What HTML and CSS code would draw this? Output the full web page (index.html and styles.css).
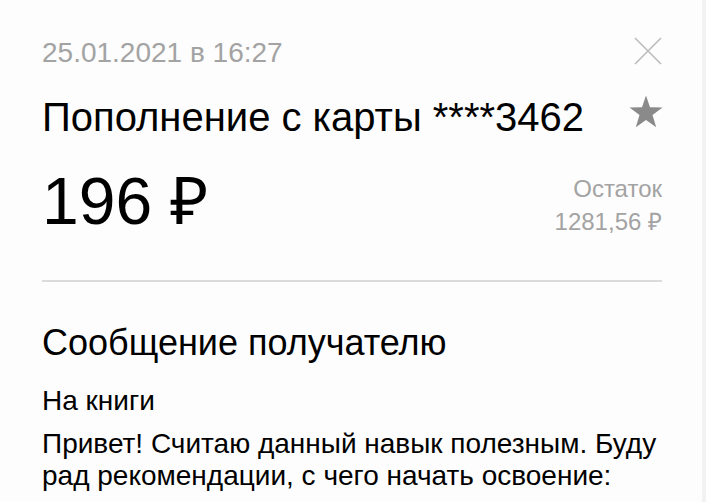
FILE: index.html
```html
<!DOCTYPE html>
<html lang="ru">
<head>
<meta charset="utf-8">
<link rel="stylesheet" href="styles.css">
</head>
<body>
<div class="page">
  <div class="card">
    <div class="row top">
      <div class="date">25.01.2021 в 16:27</div>
      <svg class="close" width="28" height="28" viewBox="0 0 28 28"><path d="M1 1L27 27M27 1L1 27" stroke="#bcbcbc" stroke-width="1.6" fill="none"/></svg>
    </div>
    <div class="row title-row">
      <div class="title">Пополнение с карты ****3462</div>
      <svg class="star" width="34" height="33" viewBox="0 0 34 33"><path d="M17 0.5L21 12.3L33.5 12.5L23.5 20L27.2 32.3L17 24.9L6.8 32.3L10.5 20L0.5 12.5L13 12.3Z" fill="#8a8a8a"/></svg>
    </div>
    <div class="row amount-row">
      <div class="amount">196 ₽</div>
      <div class="balance">
        <div class="balance-label">Остаток</div>
        <div class="balance-value">1281,56 ₽</div>
      </div>
    </div>
    <div class="divider"></div>
    <h2 class="heading">Сообщение получателю</h2>
    <p class="text first">На книги</p>
    <p class="text">Привет! Считаю данный навык полезным. Буду рад рекомендации, с чего начать освоение:</p>
  </div>
</div>
</body>
</html>
```
FILE: styles.css
```css
html, body {
  margin: 0;
  padding: 0;
  height: 100%;
  overflow: hidden;
}
body {
  background: #f4f2f1;
  font-family: "Liberation Sans", Arial, sans-serif;
  color: #000;
}
.page {
  width: 702px;
  height: 100%;
  background: #fdfdfd;
}
.card {
  padding: 33px 40px 0 42px;
}
.row {
  display: flex;
  justify-content: space-between;
  align-items: flex-start;
}
.date {
  font-size: 28px;
  line-height: 40px;
  color: #a3a3a3;
}
.close {
  margin-top: 4px;
}
.title-row {
  margin-top: 20px;
}
.title {
  font-size: 40px;
  line-height: 48px;
}
.star {
  margin-top: 2px;
  margin-right: -1px;
}
.amount-row {
  margin-top: 24px;
}
.amount {
  font-size: 66px;
  line-height: 72px;
}
.balance {
  text-align: right;
  margin-top: 7px;
  color: #a3a3a3;
  font-size: 24px;
  line-height: 33px;
}
.divider {
  margin-top: 42px;
  height: 2px;
  background: #dddada;
}
.heading {
  margin: 41px 0 0;
  font-weight: normal;
  font-size: 36px;
  line-height: 40px;
}
.text {
  margin: 11px 0 0;
  font-size: 28px;
  line-height: 32px;
}
.text.first {
  margin-top: 22px;
}
```
